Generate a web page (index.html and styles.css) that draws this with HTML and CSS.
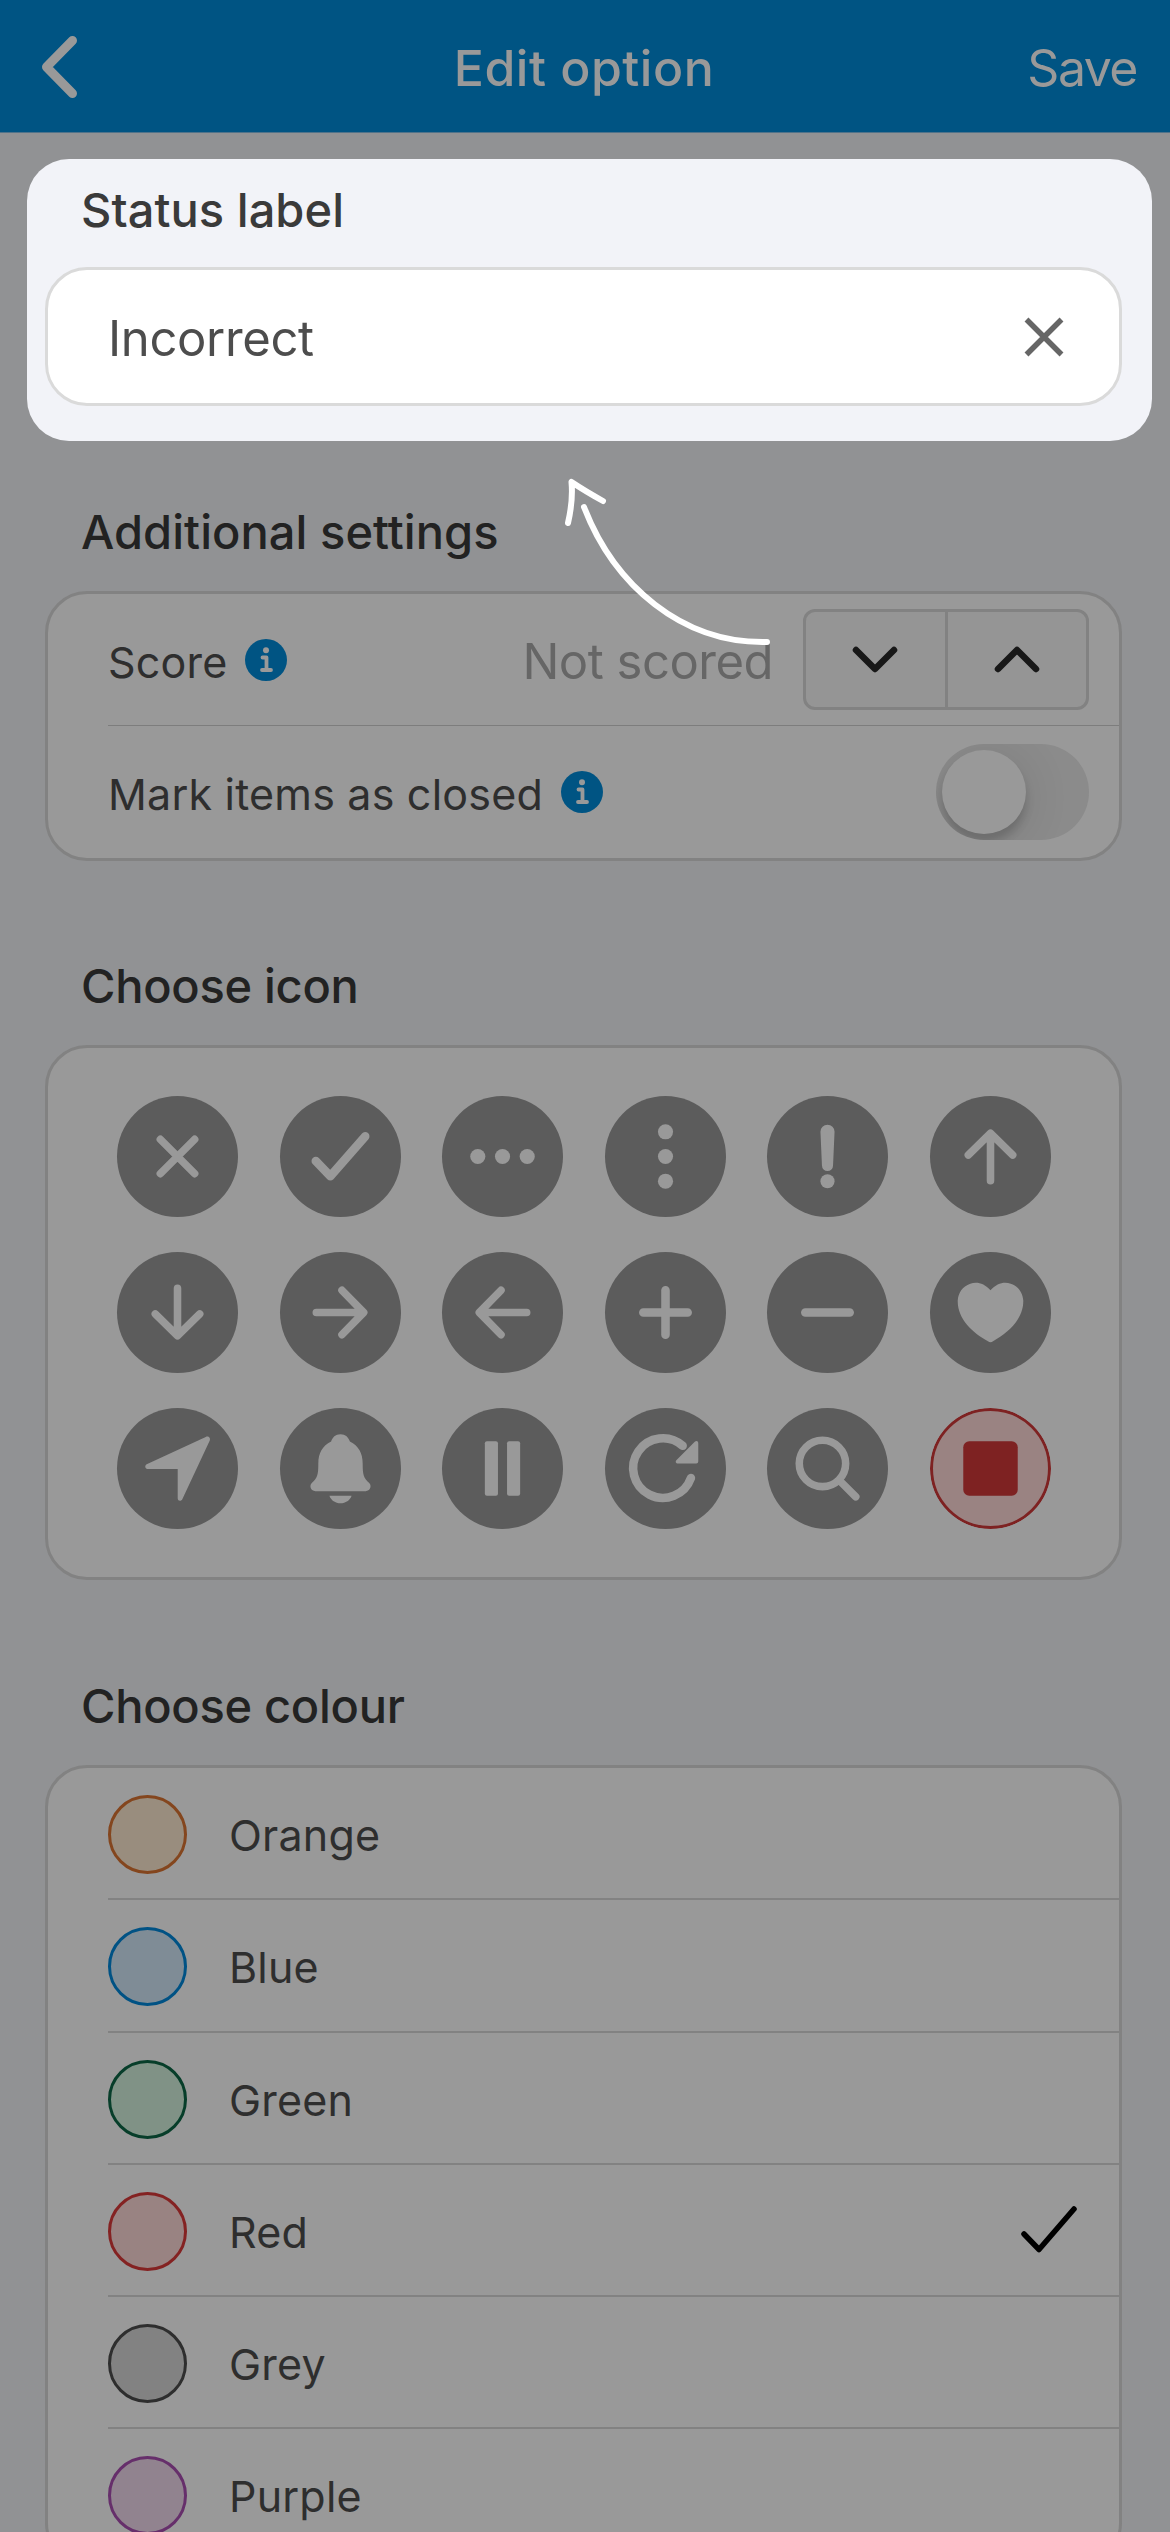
FILE: index.html
```html
<!DOCTYPE html>
<html lang="en"><head><meta charset="utf-8"><title>Edit option</title><link rel="stylesheet" href="styles.css"></head>
<body>
<div class="screen">
<header class="bar">
  <svg class="back" viewBox="0 0 44 68"><path d="M34.500 6.500 8.500 33 34.500 59.500"/></svg>
  <h1 class="title">Edit option</h1>
  <span class="save">Save</span>
</header>
<main class="content">
  <section class="spotlight">
    <h2 class="heading first">Status label</h2>
    <div class="card input"><span class="value">Incorrect</span><svg class="clear" viewBox="0 0 40 40"><path d="M2.500 2.500 37.500 37.500M37.500 2.500 2.500 37.500"/></svg></div>
  </section>
  <h2 class="heading additional">Additional settings</h2>
  <section class="card settings">
    <div class="row">
      <span class="label score">Score</span>
      <svg class="info" viewBox="0 0 42 42"><circle class="disc" cx="21" cy="21" r="21"/><circle class="dot" cx="21" cy="11.300" r="3"/><path d="M17.500 18.500H21.500V31M17 31H26"/></svg>
      <span class="muted">Not scored</span>
      <div class="stepper">
        <span class="step"><svg viewBox="0 0 46 28"><path d="M4 4 23 23 42 4"/></svg></span>
        <span class="step"><svg viewBox="0 0 46 28"><path d="M4 23 23 4 42 23"/></svg></span>
      </div>
    </div>
    <div class="row">
      <span class="label closed">Mark items as closed</span>
      <svg class="info" viewBox="0 0 42 42"><circle class="disc" cx="21" cy="21" r="21"/><circle class="dot" cx="21" cy="11.300" r="3"/><path d="M17.500 18.500H21.500V31M17 31H26"/></svg>
      <span class="toggle"><span class="knob"></span></span>
    </div>
  </section>
  <h2 class="heading icon-heading">Choose icon</h2>
  <section class="card icons">
    <svg class="ic" viewBox="0 0 120 120"><path d="M43 43 77 77M77 43 43 77"/></svg>
    <svg class="ic thick" viewBox="0 0 120 120"><path d="M35.500 64.500 50 79.500 84.500 40"/></svg>
    <svg class="ic solid" viewBox="0 0 120 120"><circle cx="35.500" cy="60" r="7.500"/><circle cx="60" cy="60" r="7.500"/><circle cx="84.500" cy="60" r="7.500"/></svg>
    <svg class="ic solid" viewBox="0 0 120 120"><circle cx="60" cy="35.500" r="7.500"/><circle cx="60" cy="60" r="7.500"/><circle cx="60" cy="84.500" r="7.500"/></svg>
    <svg class="ic solid" viewBox="0 0 120 120"><path d="M53 35.500a7 7 0 0 1 14 0L65.500 69a5.500 5.500 0 0 1-11 0Z"/><circle cx="60" cy="84.500" r="7"/></svg>
    <svg class="ic" viewBox="0 0 120 120"><path d="M60 84V38M38 58.500 60 37 82 58.500"/></svg>
    <svg class="ic" viewBox="0 0 120 120"><path d="M60 36V82M38 61.500 60 83 82 61.500"/></svg>
    <svg class="ic" viewBox="0 0 120 120"><path d="M36 60H82M61.500 38 83 60 61.500 82"/></svg>
    <svg class="ic" viewBox="0 0 120 120"><path d="M84 60H38M58.500 38 37 60 58.500 82"/></svg>
    <svg class="ic thick" viewBox="0 0 120 120"><path d="M60 38V82M38 60H82"/></svg>
    <svg class="ic thick" viewBox="0 0 120 120"><path d="M38 60H82"/></svg>
    <svg class="ic solid" viewBox="0 0 120 120"><path d="M60 38C66 31 74 29 80 31.500 88 34 92 41 92.500 48 93 66 78 80 62.500 88.500Q60 90.500 57.500 88.500C42 80 27 66 27.500 48 28 41 32 34 40 31.500 46 29 54 31 60 38Z"/></svg>
    <svg class="ic solid" viewBox="0 0 120 120"><path d="M88 28.700c2.700-1.200 5 1 4 3.600L65 90c-1.200 3-4.800 2.500-4.800-.5V60.500H31c-3.500 0-4-3.700-1-5Z"/></svg>
    <svg class="ic solid" viewBox="0 0 120 120"><path d="M60 26c5 0 8 3 9.300 7.300C78 37.500 82 45 82 55c0 12 1 14 6.500 19.500 3 3.500.5 8-3.500 8H35c-4 0-6.500-4.500-3.500-8C37 69 38 67 38 55c0-10 4-17.500 12.700-21.700C52 29 55 26 60 26ZM49 87H71c-1.500 4.500-6 7.500-11 7.500S50.500 91.500 49 87Z"/></svg>
    <svg class="ic solid" viewBox="0 0 120 120"><rect x="42.500" y="33" width="13" height="54" rx="2"/><rect x="64.500" y="33" width="13" height="54" rx="2"/></svg>
    <svg class="ic" viewBox="0 0 120 120"><path class="ring" d="M85.200 69.500A29.500 29.500 0 1 1 77 37.500"/><path class="head" d="M89 33.500c1.500-1.500 3.500-1 3.500 1.500V53q0 2-2 2H72.500c-2.500 0-3-2-1.500-3.500Z"/></svg>
    <svg class="ic" viewBox="0 0 120 120"><circle class="lens" cx="55" cy="55" r="23"/><path d="M72 72 88 88"/></svg>
    <svg class="ic chosen" viewBox="0 0 120 120"><circle class="outline" cx="60" cy="60" r="58.500"/><rect x="33" y="33" width="54" height="54" rx="6"/></svg>
  </section>
  <h2 class="heading colour-heading">Choose colour</h2>
  <section class="card colours">
    <div class="colour"><span class="swatch orange"></span><span class="label">Orange</span></div>
    <div class="colour"><span class="swatch blue"></span><span class="label">Blue</span></div>
    <div class="colour"><span class="swatch green"></span><span class="label">Green</span></div>
    <div class="colour"><span class="swatch red"></span><span class="label">Red</span><svg class="tick" viewBox="0 0 56 48"><path d="M3 28 18 43.500 53 3"/></svg></div>
    <div class="colour"><span class="swatch grey"></span><span class="label">Grey</span></div>
    <div class="colour"><span class="swatch purple"></span><span class="label">Purple</span></div>
  </section>
</main>
<svg class="pointer" viewBox="0 0 260 200"><path d="M44 47C74 125 142 184 227 182M63 41Q45 31 31.500 22C33 38 31 50 28 63"/></svg>
</div>
</body></html>
```
FILE: styles.css
```css
* { box-sizing: border-box; }
body { margin: 0; background: #919294; font-family: Inter, "Liberation Sans", sans-serif; }
.screen { position: relative; width: 1170px; height: 2532px; overflow: hidden; }
.bar { display: grid; grid-template-columns: 300px 1fr 305px; align-items: center; height: 133px; padding: 4px 33px 0 38px; background: #005483; border-bottom: 1px solid #50738a; color: #999; }
.back { width: 44px; height: 68px; }
svg { flex: none; fill: none; stroke-linecap: round; stroke-linejoin: round; }
.back path { stroke: #999; stroke-width: 9; }
.title { margin: 0 2px 0 0; text-align: center; font-size: 50px; font-weight: 500; letter-spacing: .5px; white-space: nowrap; }
.save { text-align: right; font-size: 50px; letter-spacing: -1.5px; }
.content { display: flex; flex-direction: column; padding: 26px 18px 0 27px; }
.spotlight { height: 282px; padding: 21px 30px 0 18px; border-radius: 42px; background: #f2f3f8; }
.heading { margin: 0 0 0 54px; font-size: 47px; line-height: 60px; font-weight: 500; letter-spacing: -.28px; color: #222; white-space: nowrap; }
.heading.first { margin-left: 36px; color: #3a3a3a; letter-spacing: .05px; }
.card { width: 1077px; margin-left: 18px; border: 3px solid #828282; border-radius: 42px; background: #999; overflow: hidden; }
.input { display: flex; align-items: center; justify-content: space-between; height: 139px; margin: 27px 0 0; padding: 0 55px 0 60px; border-color: #dadada; background: #fff; color: #4d4d4d; font-size: 49px; letter-spacing: -.35px; }
.value { padding-top: 3px; }
.clear { width: 40px; height: 40px; }
.clear path { stroke: #666; stroke-width: 5.500; stroke-linecap: butt; }
.additional { margin-top: 61px; letter-spacing: .05px; }
.settings { height: 270px; margin-top: 29px; padding-left: 60px; }
.row { display: flex; align-items: center; height: 132px; padding-right: 30px; border-bottom: 1px solid #7d7d7d; }
.row:last-child { border: 0; }
.label { padding-top: 1px; font-size: 43px; letter-spacing: .2px; color: #2e2e2e; white-space: nowrap; }
.row .label { padding-top: 4px; }
.info { width: 42px; height: 42px; margin-left: 18px; stroke: #999; stroke-width: 3.800; }
.disc { fill: #005483; stroke: none; }
.dot { fill: #999; stroke: none; }
.muted { margin-left: auto; padding-top: 4px; font-size: 49px; letter-spacing: -.5px; color: #666; white-space: nowrap; }
.stepper { display: flex; width: 286px; height: 101px; margin-left: 30px; border: 3px solid #828282; border-radius: 12px; background: #959595; }
.step { display: flex; flex: 1; align-items: center; justify-content: center; }
.step + .step { border-left: 3px solid #828282; }
.step svg { width: 46px; height: 28px; }
.step path { stroke: #181818; stroke-width: 6.500; }
.toggle { width: 153px; height: 96px; margin-left: auto; padding: 6px; border-radius: 48px; background: #8b8b8b; overflow: hidden; }
.knob { display: block; width: 84px; height: 84px; border-radius: 50%; background: #999; box-shadow: 0 9px 9px rgba(0,0,0,.16), 0 6px 48px rgba(0,0,0,.12); }
.icon-heading { margin-top: 95px; }
.icons { display: grid; grid-template-columns: repeat(6, 121px); grid-auto-rows: 121px; gap: 35.300px 41.500px; height: 535px; margin-top: 29px; padding: 47.700px 0 0 69px; }
.ic { width: 121px; height: 121px; border-radius: 50%; background: #5c5c5c; stroke: #999; stroke-width: 7.500; }
.thick { stroke-width: 8.500; }
.solid, .head { fill: #999; stroke: none; }
.ring { stroke-width: 8.500; }
.chosen { background: none; fill: #7e2222; stroke: none; }
.outline { fill: #9a8382; stroke: #7e2222; stroke-width: 3; }
.colour-heading { margin-top: 96px; }
.colours { margin-top: 29px; padding-left: 60px; }
.colour { display: flex; align-items: center; gap: 42px; height: 132.250px; padding: 3px 42px 0 0; border-bottom: 2px solid #828282; }
.swatch { width: 79px; height: 79px; border: 3px solid; border-radius: 50%; }
.orange { border-color: #84461e; background: #998d7e; }
.blue { border-color: #005284; background: #7f8c96; }
.green { border-color: #073e2a; background: #809286; }
.red { border-color: #842222; background: #998382; }
.grey { border-color: #2e2e2e; background: #828282; }
.purple { border-color: #662f6b; background: #91838f; }
.tick { width: 56px; height: 48px; margin: -3px 0 0 auto; }
.tick path { stroke: #000; stroke-width: 5.500; }
.pointer { position: absolute; left: 540px; top: 460px; width: 260px; height: 200px; }
.pointer path { stroke: #fff; stroke-width: 6; }
```
